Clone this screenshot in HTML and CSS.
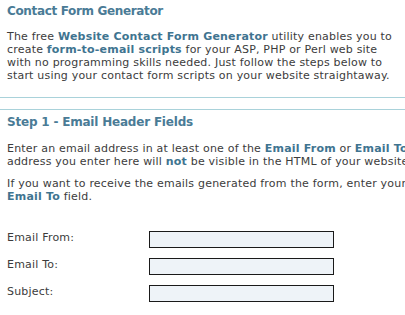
FILE: index.html
```html
<!DOCTYPE html>
<html>
<head>
<meta charset="utf-8">
<link rel="stylesheet" href="styles.css">
</head>
<body>
<div class="page">
  <section class="intro">
    <h1 class="title">Contact Form Generator</h1>
    <p class="text">The free <b class="hl">Website Contact Form Generator</b> utility enables you to<br>create <b class="hl">form-to-email scripts</b> for your ASP, PHP or Perl web site<br>with no programming skills needed. Just follow the steps below to<br>start using your contact form scripts on your website straightaway.</p>
  </section>
  <section class="step">
    <h2 class="title step-title">Step 1 - Email Header Fields</h2>
    <p class="text">Enter an email address in at least one of the <b class="hl">Email From</b> or <b class="hl">Email To</b> fields. The<br>address you enter here will <b class="hl">not</b> be visible in the HTML of your website.</p>
    <p class="text second">If you want to receive the emails generated from the form, enter your address in the<br><b class="hl">Email To</b> field.</p>
    <div class="form">
      <label class="label">Email From:</label><input class="field" type="text">
      <label class="label">Email To:</label><input class="field" type="text">
      <label class="label">Subject:</label><input class="field" type="text">
    </div>
  </section>
</div>
</body>
</html>
```
FILE: styles.css
```css
html, body {
  margin: 0;
  padding: 0;
  background: #ffffff;
  overflow: hidden;
}
.page {
  width: 405px;
  font-family: Verdana, "DejaVu Sans", sans-serif;
  color: #3c3c3c;
  font-size: 11px;
  letter-spacing: 0.2px;
}
.intro {
  padding: 3px 0 15px 7px;
  border-bottom: 1px solid #a9d2da;
}
.step {
  margin-top: 11px;
  padding: 4px 0 0 7px;
  border-top: 1px solid #a9d2da;
}
.title {
  margin: 0;
  font-size: 12px;
  line-height: 16px;
  font-weight: bold;
  color: #4a7b96;
  letter-spacing: -0.35px;
}
.step-title {
  letter-spacing: -0.2px;
}
.text {
  margin: 11px 0 0 0;
  line-height: 13px;
  white-space: nowrap;
}
.step .text {
  margin-top: 12px;
}
.step .text.second {
  margin-top: 9px;
}
.hl {
  color: #3f7490;
  font-weight: bold;
}
.form {
  margin-top: 28px;
  display: grid;
  grid-template-columns: 142px 185px;
  row-gap: 10px;
  align-items: start;
}
.label {
  line-height: 13px;
  color: #3c3c3c;
}
.field {
  box-sizing: border-box;
  width: 185px;
  height: 17px;
  margin: 0;
  padding: 0 2px;
  border: 1px solid #1a1a1a;
  background: #eef3f8;
  font: inherit;
}
```
